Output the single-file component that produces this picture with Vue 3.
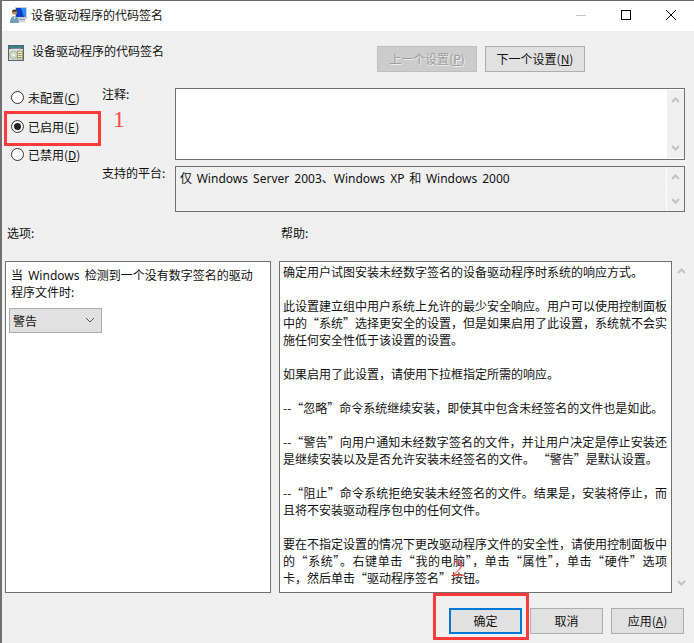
<script setup>
const radios = [
  { text: '未配置(', key: 'C', on: false },
  { text: '已启用(', key: 'E', on: true },
  { text: '已禁用(', key: 'D', on: false },
]
const help = [
  { t: '确定用户试图安装未经数字签名的设备驱动程序时系统的响应方式。' },
  { t: '' },
  { t: '此设置建立组中用户系统上允许的最少安全响应。用户可以使用控制面板', j: true },
  { t: '中的“系统”选择更安全的设置，但是如果启用了此设置，系统就不会实', j: true },
  { t: '施任何安全性低于该设置的设置。' },
  { t: '' },
  { t: '如果启用了此设置，请使用下拉框指定所需的响应。' },
  { t: '' },
  { t: '--“忽略”命令系统继续安装，即使其中包含未经签名的文件也是如此。' },
  { t: '' },
  { t: '--“警告”向用户通知未经数字签名的文件，并让用户决定是停止安装还', j: true },
  { t: '是继续安装以及是否允许安装未经签名的文件。 “警告”是默认设置。' },
  { t: '' },
  { t: '--“阻止”命令系统拒绝安装未经签名的文件。结果是，安装将停止，而', j: true },
  { t: '且将不安装驱动程序包中的任何文件。' },
  { t: '' },
  { t: '要在不指定设置的情况下更改驱动程序文件的安全性，请使用控制面板中', j: true },
  { t: '的“系统”。右键单击“我的电脑”，单击“属性”，单击“硬件”选项', j: true },
  { t: '卡，然后单击“驱动程序签名”按钮。' },
]
</script>

<template>
  <div class="win" lang="zh-CN">
    <header class="titlebar">
      <svg class="ticon" width="17" height="16" viewBox="0 0 17 16">
        <rect x="5" y="0" width="12" height="12" fill="#c9ced3" />
        <rect x="6" y="1" width="10" height="9" fill="#0b3fc4" />
        <path d="M11 1h5v9h-2z" fill="#2f8df0" />
        <path d="M9 12h6v1.500H9z" fill="#9aa2aa" />
        <path d="M7 14h9v1.500H7z" fill="#d4d8dc" />
        <circle cx="4.500" cy="5" r="2.600" fill="#b98a5e" />
        <path d="M2 4.500c0-2.500 5-2.500 5 0z" fill="#2c2a2a" />
        <path d="M0 16c0-5 2-7 4.500-7S9 11 9 16z" fill="#6f9fb8" />
        <path d="M3.500 9.500h2L4.500 13z" fill="#e6eef2" />
      </svg>
      <span class="ttext">设备驱动程序的代码签名</span>
      <div class="controls">
        <svg width="10" height="10" viewBox="0 0 10 10"><path d="M0 5.500h10" stroke="#c4c4c4" /></svg>
        <svg width="10" height="10" viewBox="0 0 10 10"><rect x=".5" y=".5" width="9" height="9" fill="none" stroke="#000" /></svg>
        <svg width="10" height="10" viewBox="0 0 10 10"><path d="M0 0l10 10M10 0L0 10" stroke="#000" fill="none" /></svg>
      </div>
    </header>

    <main class="body">
      <section class="head">
        <svg class="policy" width="16" height="16" viewBox="0 0 16 16">
          <rect x="0" y="0" width="16" height="16" fill="#55636c" />
          <rect x="1" y="1" width="14" height="2" fill="#3f7f86" />
          <rect x="3" y="3" width="10" height="1" fill="#8d7fa0" />
          <rect x="1" y="4" width="14" height="11" fill="#dde2d8" />
          <circle cx="5.500" cy="10" r="4" fill="#cfd8c4" stroke="#8aa0a0" stroke-width=".6" />
          <circle cx="5.500" cy="10" r="1.200" fill="#fff" />
          <rect x="9.500" y="6" width="5" height="8" fill="#f1e6ad" stroke="#73735f" stroke-width=".6" />
          <path d="M10.500 8.500h3M10.500 10.500h3M10.500 12.500h3" stroke="#66665a" stroke-width=".7" />
        </svg>
        <span class="htext">设备驱动程序的代码签名</span>
        <div class="navs">
          <button class="btn off">上一个设置(<u>P</u>)</button>
          <button class="btn">下一个设置(<u>N</u>)</button>
        </div>
      </section>

      <section class="config">
        <div class="radios">
          <label v-for="r in radios" :key="r.key" class="radio">
            <span class="dot" :class="{ on: r.on }"></span>
            <span>{{ r.text }}<u>{{ r.key }}</u>)</span>
          </label>
        </div>
        <div class="form">
          <span class="flabel a">注释:</span>
          <div class="field notes">
            <div class="fill"></div>
            <div class="sbar">
              <svg width="9" height="6" viewBox="0 0 9 6"><path d="M1 5l3.500-3.500L8 5" class="chev" /></svg>
              <svg width="9" height="6" viewBox="0 0 9 6"><path d="M1 1l3.500 3.500L8 1" class="chev" /></svg>
            </div>
          </div>
          <span class="flabel b">支持的平台:</span>
          <div class="field plat">
            <div class="fill ptext">仅 <span class="latin">Windows Server 2003</span>、<span class="latin">Windows XP</span> 和 <span class="latin">Windows 2000</span></div>
            <div class="sbar">
              <svg width="9" height="6" viewBox="0 0 9 6"><path d="M1 5l3.500-3.500L8 5" class="chev" /></svg>
              <svg width="9" height="6" viewBox="0 0 9 6"><path d="M1 1l3.500 3.500L8 1" class="chev" /></svg>
            </div>
          </div>
        </div>
      </section>

      <section class="labels">
        <span class="lopt">选项:</span>
        <span class="lhelp">帮助:</span>
      </section>

      <section class="panes">
        <div class="options">
          <p class="otext">当 <span class="latin">Windows</span> 检测到一个没有数字签名的驱动<br />程序文件时:</p>
          <div class="combo">
            <span>警告</span>
            <svg width="10" height="6" viewBox="0 0 10 6"><path d="M1 1l4 4 4-4" fill="none" stroke="#555" /></svg>
          </div>
        </div>
        <div class="help">
          <div v-for="(l, i) in help" :key="i" class="hline" :class="{ just: l.j }">{{ l.t }}</div>
        </div>
        <div class="hbar">
          <svg width="9" height="6" viewBox="0 0 9 6"><path d="M1 5l3.500-3.500L8 5" class="chev" /></svg>
          <svg width="9" height="6" viewBox="0 0 9 6"><path d="M1 1l3.500 3.500L8 1" class="chev" /></svg>
        </div>
      </section>

      <footer class="foot">
        <button class="btn ok">确定</button>
        <button class="btn">取消</button>
        <button class="btn">应用(<u>A</u>)</button>
      </footer>
    </main>

    <div class="mark m1"></div>
    <span class="num n1">1</span>
    <div class="mark m2"></div>
    <span class="num n2">2</span>
  </div>
</template>

<style>
html, body { margin: 0; background: #f0f0f0; }
</style>

<style scoped>
.win {
  position: relative;
  width: 694px;
  height: 643px;
  box-sizing: border-box;
  overflow: hidden;
  background: #f0f0f0;
  border-left: 2px solid #707070;
  font: 12px/17px "Noto Sans CJK SC", sans-serif;
  color: #111;
}
.latin { font-family: "Noto Sans", sans-serif; }
.titlebar {
  display: flex;
  align-items: center;
  height: 31px;
  box-sizing: border-box;
  border-top: 1px solid #6a6a6a;
  background: #fff;
  padding: 0 0 3px 8px;
}
.ttext { margin-left: 4px; }
.controls {
  margin-left: auto;
  display: flex;
  gap: 35px;
  padding-right: 18px;
}
.body { display: flex; flex-direction: column; }
.head {
  display: flex;
  align-items: flex-start;
  height: 26px;
  padding: 15px 0 0 6px;
}
.policy { margin-top: -1px; }
.htext { margin: -4px 0 0 8px; }
.navs { margin-left: auto; display: flex; gap: 8px; padding-right: 109px; }
.btn {
  box-sizing: border-box;
  width: 100px;
  height: 26px;
  padding: 0 0 2px;
  background: #e1e1e1;
  border: 1px solid #adadad;
  font: inherit;
  color: #111;
}
.btn.off {
  background: #cccccc;
  border-color: #bfbfbf;
  color: #9d9d9d;
  text-shadow: 1px 1px 0 #eee;
}
.config { display: flex; margin-top: 16px; }
.radios {
  width: 100px;
  padding: 1px 0 0 9px;
  box-sizing: border-box;
  display: flex;
  flex-direction: column;
  gap: 11.500px;
}
.radio { display: flex; align-items: center; gap: 4px; }
.dot {
  width: 13px;
  height: 13px;
  box-sizing: border-box;
  border: 1px solid #333;
  border-radius: 50%;
  background: #fff;
  display: flex;
  align-items: center;
  justify-content: center;
}
.dot.on::after {
  content: "";
  width: 7px;
  height: 7px;
  border-radius: 50%;
  background: #222;
}
.form {
  display: grid;
  grid-template-columns: 73px 510px;
  grid-template-rows: 72px 46px;
  row-gap: 6px;
}
.flabel.a { margin-top: -3px; }
.flabel.b { margin-top: -2px; }
.field {
  display: flex;
  box-sizing: border-box;
  border: 1px solid #707070;
  background: #fff;
}
.fill { flex: 1; }
.plat { background: #f0f0f0; }
.ptext { padding: 2px 0 0 4px; border-right: 1px solid #fff; word-spacing: 2px; }
.sbar, .hbar {
  width: 17px;
  flex: none;
  background: #f0f0f0;
  display: flex;
  flex-direction: column;
  justify-content: space-between;
  align-items: center;
  box-sizing: border-box;
  padding: 7px 0 7px;
}
.notes .sbar { margin: 1px 0; }
.chev { fill: none; stroke: #c2c2c2; stroke-width: 2; }
.labels { display: flex; margin-top: 12px; padding-left: 5px; }
.lopt { width: 274px; }
.panes { display: flex; margin-top: 20px; height: 332px; padding-left: 3px; }
.options {
  box-sizing: border-box;
  width: 266px;
  border: 1px solid #707070;
  background: #fff;
  padding: 5px 0 0 5px;
}
.otext { margin: 0; line-height: 16px; word-spacing: 2.500px; }
.combo {
  box-sizing: border-box;
  width: 93px;
  height: 25px;
  margin: 8px 0 0 -2px;
  padding: 0 6px 1px 3px;
  background: #e1e1e1;
  border: 1px solid #adadad;
  display: flex;
  align-items: center;
  justify-content: space-between;
}
.help {
  box-sizing: border-box;
  width: 393px;
  margin-left: 8px;
  border: 1px solid #707070;
  background: #fff;
  padding: 1px 4px 0 3px;
}
.hline { min-height: 17px; white-space: nowrap; }
.hline.just { white-space: normal; text-align: justify; text-align-last: justify; }
.hbar { width: 18px; }
.foot { display: flex; gap: 8px; margin-top: 15px; padding-left: 447px; }
.foot .btn { width: 73px; }
.foot .ok { border: 2px solid #0078d7; }
.mark {
  position: absolute;
  box-sizing: border-box;
  border: 3px solid #fb3a3a;
}
.m1 { left: 2px; top: 111px; width: 97px; height: 35px; }
.m2 { left: 431px; top: 593px; width: 96px; height: 47px; }
.num {
  position: absolute;
  font-family: "Liberation Serif", serif;
  font-size: 24px;
  line-height: 24px;
  color: #fb4a4a;
}
.n1 { left: 111px; top: 107px; }
.n2 { left: 450px; top: 556px; opacity: .75; }
</style>
